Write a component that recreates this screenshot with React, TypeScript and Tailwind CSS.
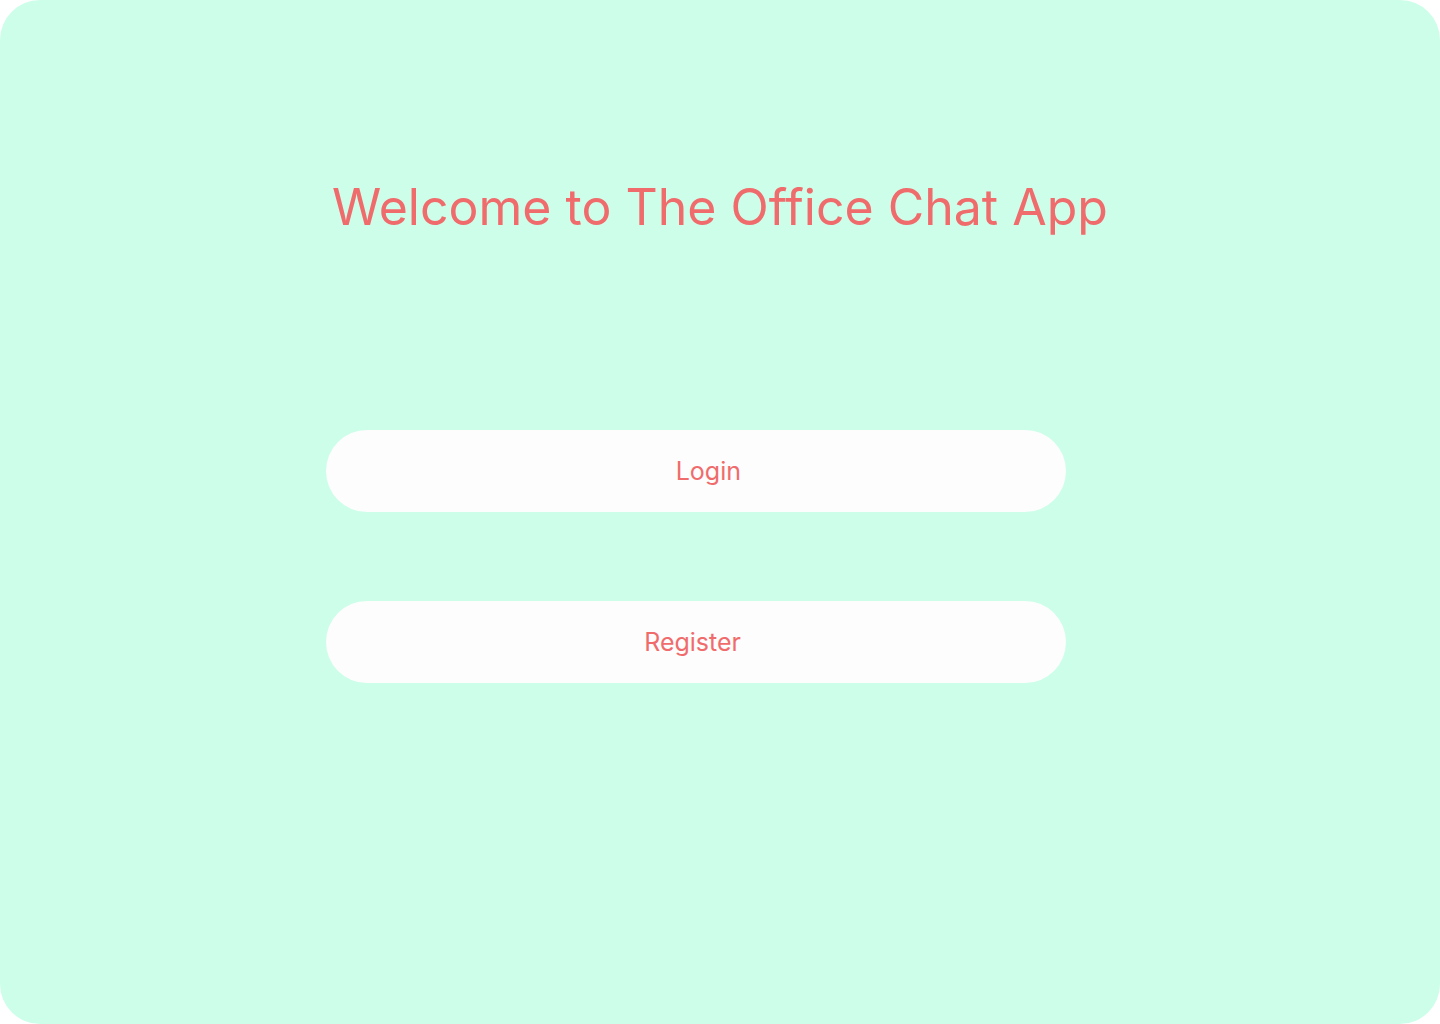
import React from "react";

export default function App() {
  return (
    <div className="w-[1440px] h-[1024px] bg-white">
      <div
        className="w-[1440px] h-[1024px] rounded-[40px] bg-[#cdfeea] flex flex-col"
        style={{ fontFamily: "Inter, 'Noto Sans', sans-serif" }}
      >
        <h1 className="mt-[177px] text-center text-[50px] leading-[60px] font-normal text-[#f06c6c]">
          Welcome to The Office Chat App
        </h1>
        <div className="mt-[193px] ml-[326px] w-[740px] flex flex-col gap-[89px]">
          <button className="h-[82px] w-full rounded-[41px] bg-[#fdfdfd] flex items-center justify-end pt-[2px] pr-[325px] text-[25px] text-[#f06c6c]">
            Login
          </button>
          <button className="h-[82px] w-full rounded-[41px] bg-[#fdfdfd] flex items-center justify-end pt-[2px] pr-[325px] text-[25px] text-[#f06c6c]">
            Register
          </button>
        </div>
      </div>
    </div>
  );
}
